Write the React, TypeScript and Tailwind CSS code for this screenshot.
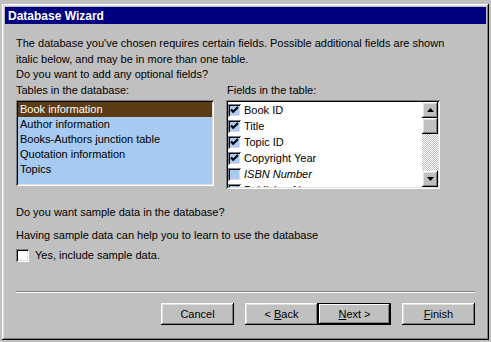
import React from 'react';

const raised =
  'shadow-[inset_-1px_-1px_#000,inset_1px_1px_#fff,inset_-2px_-2px_#808080,inset_2px_2px_#dfdfdf]';
const sunken =
  'shadow-[inset_1px_1px_#808080,inset_-1px_-1px_#fff,inset_2px_2px_#000,inset_-2px_-2px_#dfdfdf]';

const TABLES = [
  'Book information',
  'Author information',
  'Books-Authors junction table',
  'Quotation information',
  'Topics',
];

const FIELDS = [
  { label: 'Book ID', checked: true },
  { label: 'Title', checked: true },
  { label: 'Topic ID', checked: true },
  { label: 'Copyright Year', checked: true },
  { label: 'ISBN Number', checked: false, italic: true },
  { label: 'Publisher Name', checked: true },
];

function CheckBox({ checked, fill }: { checked: boolean; fill: string }) {
  return (
    <div className={`relative w-[13px] h-[13px] shrink-0 ${fill} ${sunken}`}>
      {checked && (
        <svg className="absolute left-0 top-0" width="13" height="13" viewBox="0 0 13 13">
          <path d="M3 5.5 L5.2 7.8 L10 3" fill="none" stroke="#000" strokeWidth="2" />
        </svg>
      )}
    </div>
  );
}

function Arrow({ up }: { up: boolean }) {
  return (
    <div className={`w-[16px] h-[16px] bg-[#c0c0c0] flex items-center justify-center ${raised}`}>
      <svg width="7" height="4" viewBox="0 0 7 4">
        <path d={up ? 'M3.5 0 L7 4 L0 4 Z' : 'M0 0 L7 0 L3.5 4 Z'} fill="#000" />
      </svg>
    </div>
  );
}

function Button({ children, isDefault }: { children: React.ReactNode; isDefault?: boolean }) {
  return (
    <div
      className={`w-[73px] h-[22px] bg-[#c0c0c0] flex items-center justify-center ${
        isDefault
          ? 'shadow-[inset_0_0_0_1px_#000,inset_-2px_-2px_#000,inset_2px_2px_#fff,inset_-3px_-3px_#808080]'
          : raised
      }`}
    >
      {children}
    </div>
  );
}

export default function App() {
  return (
    <div className="w-[491px] h-[342px] bg-[#c0c0c0] pt-[4px] pl-[2px] overflow-hidden font-['Liberation_Sans',Arial,sans-serif] text-[11px] text-black">
      <div className={`w-[487px] h-[336px] bg-[#c0c0c0] p-[3px] flex flex-col ${raised}`}>
        {/* Title bar */}
        <div className="h-[17px] bg-[#000080] flex items-center pl-[3px] text-white font-bold text-[12px]">
          Database Wizard
        </div>

        {/* Body */}
        <div className="px-[11px] pt-[11px] leading-[16px]">
          <p>
            The database you've chosen requires certain fields. Possible additional fields are shown
            <br />
            italic below, and may be in more than one table.
          </p>
          <p className="mt-[-1px]">Do you want to add any optional fields?</p>

          <div className="flex gap-[12px]">
            {/* Tables list */}
            <div className="w-[198px]">
              <div>Tables in the database:</div>
              <div className={`mt-[2px] h-[86px] bg-[#a6caf0] p-[2px] ${sunken}`}>
                {TABLES.map((t, i) => (
                  <div
                    key={t}
                    className={`h-[15px] leading-[15px] pl-[2px] ${
                      i === 0 ? 'bg-[#5c3c14] text-white' : ''
                    }`}
                  >
                    {t}
                  </div>
                ))}
              </div>
            </div>

            {/* Fields list */}
            <div className="w-[214px]">
              <div className="pl-[1px]">Fields in the table:</div>
              <div className={`mt-[2px] h-[89px] bg-white p-[2px] flex ${sunken}`}>
                <div className="flex-1 overflow-hidden pt-[0px]">
                  {FIELDS.map((f) => (
                    <div key={f.label} className="h-[16px] flex items-center pl-[0px] gap-[3px]">
                      <CheckBox checked={f.checked} fill="bg-[#a6caf0]" />
                      <span className={f.italic ? 'italic' : ''}>{f.label}</span>
                    </div>
                  ))}
                </div>
                <div className="w-[16px] flex flex-col">
                  <Arrow up />
                  <div className={`h-[16px] bg-[#c0c0c0] ${raised}`} />
                  <div className="flex-1 bg-[repeating-conic-gradient(#c0c0c0_0_25%,#fff_0_50%)] bg-[length:2px_2px]" />
                  <Arrow up={false} />
                </div>
              </div>
            </div>
          </div>

          <p className="mt-[15px]">Do you want sample data in the database?</p>
          <p className="mt-[7px]">Having sample data can help you to learn to use the database</p>
          <div className="mt-[4px] flex items-center gap-[6px]">
            <CheckBox checked={false} fill="bg-white" />
            <span>Yes, include sample data.</span>
          </div>

          {/* Separator */}
          <div className="mt-[28px] h-[2px] border-t border-[#808080] border-b border-b-white" />

          {/* Buttons */}
          <div className="mt-[10px] flex justify-end">
            <Button>Cancel</Button>
            <div className="ml-[11px] flex">
              <Button>
                &lt; <span className="underline ml-[3px]">B</span>ack
              </Button>
              <Button isDefault>
                <span className="underline">N</span>ext &gt;
              </Button>
            </div>
            <div className="ml-[11px]">
              <Button>
                <span className="underline">F</span>inish
              </Button>
            </div>
          </div>
        </div>
      </div>
    </div>
  );
}
